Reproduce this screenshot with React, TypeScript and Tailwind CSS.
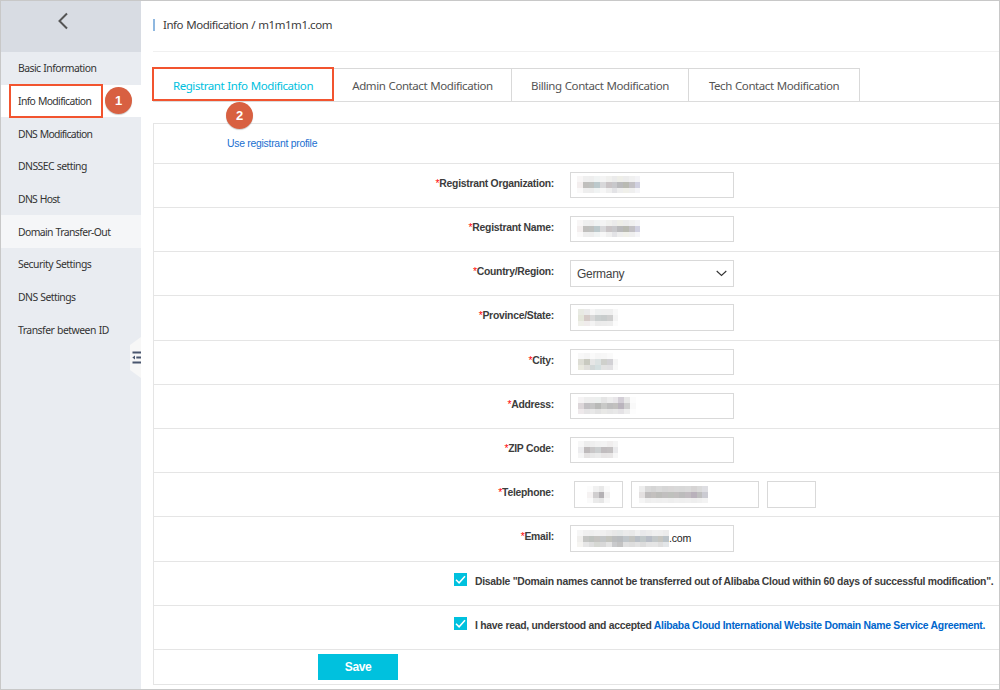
import React from "react";

type NavItem = { label: string; tracking: string; tone: string };

const NAV: NavItem[] = [
  { label: "Basic Information", tracking: "tracking-[-0.53px]", tone: "" },
  { label: "Info Modification", tracking: "tracking-[-0.64px]", tone: "bg-white" },
  { label: "DNS Modification", tracking: "tracking-[-0.7px]", tone: "" },
  { label: "DNSSEC setting", tracking: "tracking-[-0.54px]", tone: "" },
  { label: "DNS Host", tracking: "tracking-[-0.7px]", tone: "" },
  { label: "Domain Transfer-Out", tracking: "tracking-[-0.6px]", tone: "bg-[#f5f6f8]" },
  { label: "Security Settings", tracking: "tracking-[-0.5px]", tone: "" },
  { label: "DNS Settings", tracking: "tracking-[-0.55px]", tone: "" },
  { label: "Transfer between ID", tracking: "tracking-[-0.5px]", tone: "" },
];

const CELL = 5.75;

/** Pixelated stand-in for a masked value: one hex grey per cell, row by row. */
function Mosaic({ rows, className = "" }: { rows: string[][]; className?: string }) {
  const w = Math.max(...rows.map((r) => r.length)) * CELL;
  const h = rows.length * CELL;
  return (
    <svg width={w} height={h} viewBox={`0 0 ${w} ${h}`} shapeRendering="crispEdges" className={`shrink-0 ${className}`}>
      {rows.map((r, y) =>
        r.map((c, x) => <rect key={`${x}-${y}`} x={x * CELL} y={y * CELL} width={CELL} height={CELL} fill={`#${c}`} />),
      )}
    </svg>
  );
}

const NAME_MASK = [
  ["f8f6f6", "efefef", "eeeeee", "f0f3f3", "f4f4f4", "f0f0ee", "ebebeb", "eeeee8", "ececec", "f0f0f0", "f3f3f6"],
  ["f3eeee", "c0bfbd", "bfc1bf", "bcc9cc", "d8d8da", "c9c4c6", "c8c8cb", "bababc", "b9bab2", "c3c1c5", "d0d0e0"],
  ["faf9f9", "eeeeee", "ededed", "f0f3f3", "f7f7f7", "efefef", "e3e3e6", "eeeeee", "f0f0ea", "efefef", "f5f5f8"],
];
const PROVINCE_MASK = [
  ["e8eae3", "eaeaea", "f6f6f6", "eef0f0", "efefef", "efefef", "f8f8f8"],
  ["e4e6da", "d5cbc8", "d9d9d9", "cacfcf", "c8cccc", "cfcfcf", "f4f4f4"],
  ["efefe9", "f0ecec", "f3f3f3", "ebebeb", "ececec", "ededed", "fbfbfb"],
];
const CITY_MASK = [
  ["f8f8f8", "f5f5f5", "fafafa", "f6f6f6", "f7f7f7", "fafafa", "ffffff"],
  ["ddddd5", "c9cac0", "e6e6e6", "dce2e2", "cfd0cc", "d2d1d5", "f5f5f5"],
  ["e9e9df", "e0dfdb", "d3d8d8", "d4dfe0", "e3e3e3", "e2e1e3", "f8f8f8"],
];
const ADDRESS_MASK = [
  ["f5f3f4", "eeeeee", "eeeeee", "ecefee", "e5e5e5", "ededed", "e8e6e9", "d3ced6", "e8e8e8", "fcfcfc"],
  ["dcd6d9", "c2c0c3", "c5c5c5", "b9bab8", "c8c9c7", "bebebe", "c2c1bf", "bab4bd", "cfcfcf", "f9f9f9"],
  ["eee9eb", "e5e4e5", "e8e8e8", "e2e2e2", "e8e8e6", "e5e5e5", "e8e8e8", "e4e2e5", "eeeeee", "fdfdfd"],
];
const ZIP_MASK = [
  ["f7f7f7", "ededed", "efefef", "f2f2f2", "f3f3f3", "f0eeee", "f4f4f4"],
  ["ececee", "bebabb", "c9c7c8", "cccfd0", "c1bdbf", "c3c0c1", "e9e9eb"],
  ["f5f5f5", "e5e3e3", "e8e8e8", "ebebeb", "e7e5e5", "e8e6e6", "f6f6f6"],
];
const AREA_MASK = [
  ["fcfcfc", "f0f0f0", "e8e8e8", "fafafa"],
  ["f5f2f2", "d0cecf", "b4b1b4", "f0efef"],
  ["fafafa", "eaeaea", "e6e6e6", "f8f8f8"],
];
const PHONE_MASK = [
  ["ededed", "d9d9d9", "d5d5d5", "dadada", "d6d6d6", "d9d7d7", "d9d9d9", "d8d8d8", "dadada", "d6d4d4", "dadada", "dedee2"],
  ["e3e0e0", "bfbdbd", "c3c0be", "bdbdba", "c1bfbf", "bfc1bd", "c2bfbf", "bcbcbc", "c1bcc0", "b9b1bb", "bfbfbf", "cbcbd2"],
  ["f5f5f5", "eeeeee", "f0f0f0", "efefef", "f0f0f0", "eeeeee", "f0f0f0", "efefef", "f0f0f0", "eeeeee", "f0f0f0", "f3f3f3"],
];
const EMAIL_MASK = [
  ["f6f6f6", "f0f0f0", "efefef", "f1f1f1", "f0f0f0", "ececec", "e8e8e8", "e5e8e8", "ebebeb", "e9e9e9", "f0f0f0", "e9e9eb", "ececec", "f0f0f0", "efefef", "ececec"],
  ["f0efed", "c5c6c4", "bfc3bf", "c5c4c1", "c3c6c7", "c3c4be", "bcbebf", "b9bcbf", "c0c6ca", "c3c4c1", "b9bfc6", "c1c8c9", "b8bdc6", "c3c8c9", "c6c6c1", "bbc3c8"],
  ["f5f4f1", "e6e6e6", "dedede", "d6d8d3", "d8d8d8", "e4e4e4", "c9cacc", "c3c3c3", "e0e0e0", "dddddd", "e2e2e2", "dcdcdc", "e4e4e4", "e5e5e5", "dedede", "e3e6e8"],
];

const BOX = "flex h-full items-center border border-[#d9d9d9] bg-white";
const SMALL_BOLD = "text-[10.4px] font-bold tracking-[-0.275px] whitespace-nowrap text-[#3c3c3c]";

function Field({
  label,
  tall = false,
  deep = false,
  children,
}: {
  label: string;
  tall?: boolean;
  deep?: boolean;
  children: React.ReactNode;
}) {
  return (
    <div className={`flex shrink-0 items-start border-b border-[#e5e5e5] ${tall ? "h-[45px]" : "h-[44px]"}`}>
      <div className={`w-[400px] shrink-0 pt-[12px] text-right leading-[15px] ${SMALL_BOLD}`}>
        <span className="font-normal text-[#f00]">*</span>
        {label}
      </div>
      <div className={`mt-[8px] ml-4 flex ${deep ? "h-[27px]" : "h-[26px]"}`}>{children}</div>
    </div>
  );
}

function Masked({ rows, inset = "ml-[6px]" }: { rows: string[][]; inset?: string }) {
  return (
    <div className={`${BOX} w-[164px]`}>
      <Mosaic rows={rows} className={inset} />
    </div>
  );
}

function Check() {
  return (
    <span className="flex size-[13px] shrink-0 items-center justify-center bg-[#00c1de]">
      <svg width="13" height="13" viewBox="0 0 13 13" fill="none" stroke="#fff" strokeWidth="1.5">
        <path d="M2 6.7 L5.1 9.8 L11 3.2" />
      </svg>
    </span>
  );
}

function Badge({ n, className }: { n: number; className: string }) {
  return (
    <span
      className={`absolute flex size-[27px] items-center justify-center rounded-full bg-[#d86041] text-[13px] font-bold text-white shadow-[0_1px_1px_rgba(0,0,0,0.2)] ${className}`}
    >
      {n}
    </span>
  );
}

const TAB = "flex items-center justify-center border-t border-r border-[#d9d9d9] pt-px whitespace-nowrap";

export default function App() {
  return (
    <div className="relative flex h-[690px] w-[1000px] overflow-hidden border border-[#c8c8c8] bg-white font-['Liberation_Sans',Arial,sans-serif]">
      <aside className="relative flex w-[140px] shrink-0 flex-col bg-[#e9ecf1] font-['Noto_Sans',sans-serif]">
        <div className="flex h-[51px] shrink-0 items-center justify-center bg-[#d8dce3]">
          <svg width="12" height="18" viewBox="0 0 12 18" fill="none" stroke="#555" strokeWidth="2" className="relative -top-[6px] -left-[8px]">
            <path d="M10 1.5 L2.5 9 L10 16.5" />
          </svg>
        </div>
        <nav className="flex flex-col text-[10.4px] text-[#333] [word-spacing:0.6px]">
          {NAV.map((i) => (
            <div key={i.label} className={`flex h-[32.7px] items-center pt-[1.5px] pl-[17px] whitespace-nowrap ${i.tone}`}>
              <span className={i.tracking}>{i.label}</span>
            </div>
          ))}
        </nav>
        <svg width="11" height="42" viewBox="0 0 11 42" className="absolute top-[336px] right-0">
          <path d="M11 0 L0 8 V33 L11 41 Z" fill="#f7f7f7" />
          <path d="M2.5 15.5H11M6.3 20.5H11M2.5 25.5H11" stroke="#4a566e" strokeWidth="2" />
          <path d="M2.3 20.5 L5 18.6 V22.4 Z" fill="#4a566e" />
        </svg>
      </aside>

      <main className="flex min-w-0 flex-1 flex-col pl-[12px]">
        <header className="flex h-[51px] shrink-0 items-center border-b border-[#f0f0f0] pb-[3px] font-['Noto_Sans',sans-serif]">
          <span className="h-[12px] w-[2px] bg-[#8fb8e0]" />
          <h1 className="ml-[8px] text-[11.5px] tracking-[-0.46px] whitespace-nowrap text-[#3c3c3c] [word-spacing:0.6px]">Info Modification / m1m1m1.com</h1>
        </header>

        <div className="mt-4 flex h-[34px] shrink-0 border-b border-[#dcdcdc] font-['Noto_Sans',sans-serif] text-[11.5px] tracking-[-0.43px] text-[#555] [word-spacing:0.6px]">
          <div className={`${TAB} w-[181px] text-[#00c1de]`}>Registrant Info Modification</div>
          <div className={`${TAB} w-[178px]`}>Admin Contact Modification</div>
          <div className={`${TAB} w-[177px]`}>Billing Contact Modification</div>
          <div className={`${TAB} w-[171px]`}>Tech Contact Modification</div>
        </div>

        <section className="mt-[21px] flex flex-col border-t border-l border-[#e5e5e5]">
          <div className="flex h-[40px] shrink-0 items-center border-b border-[#e5e5e5] pl-[73px]">
            <a className="text-[10.4px] tracking-[-0.26px] text-[#1a6fd0]">Use registrant profile</a>
          </div>
          <Field label="Registrant Organization:"><Masked rows={NAME_MASK} /></Field>
          <Field label="Registrant Name:"><Masked rows={NAME_MASK} /></Field>
          <Field label="Country/Region:" deep>
            <div className={`${BOX} w-[164px] justify-between pr-[6px] pl-[6px] text-[12px] tracking-[-0.3px] text-[#444]`}>
              Germany
              <svg width="11" height="7" viewBox="0 0 11 7" fill="none" stroke="#333" strokeWidth="1.1">
                <path d="M0.7 1 L5.5 5.4 L10.3 1" />
              </svg>
            </div>
          </Field>
          <Field label="Province/State:" tall deep><Masked rows={PROVINCE_MASK} inset="ml-[7px]" /></Field>
          <Field label="City:"><Masked rows={CITY_MASK} inset="ml-[7px]" /></Field>
          <Field label="Address:"><Masked rows={ADDRESS_MASK} inset="ml-[7px]" /></Field>
          <Field label="ZIP Code:"><Masked rows={ZIP_MASK} inset="ml-[7px]" /></Field>
          <Field label="Telephone:" deep>
            <div className="ml-1 flex gap-2">
              <div className={`${BOX} w-[49px] justify-center`}><Mosaic rows={AREA_MASK} /></div>
              <div className={`${BOX} w-[128px]`}><Mosaic rows={PHONE_MASK} className="ml-[7px]" /></div>
              <div className={`${BOX} w-[49px]`} />
            </div>
          </Field>
          <Field label="Email:" tall deep>
            <div className={`${BOX} w-[164px] text-[10.6px] tracking-[-0.2px] text-[#222]`}>
              <Mosaic rows={EMAIL_MASK} className="ml-[6px]" />
              .com
            </div>
          </Field>
          <div className={`flex h-[44px] shrink-0 border-b border-[#e5e5e5] pt-[11px] pl-[300px] leading-[17px] ${SMALL_BOLD}`}>
            <Check />
            <span className="ml-[8px]">Disable "Domain names cannot be transferred out of Alibaba Cloud within 60 days of successful modification".</span>
          </div>
          <div className={`flex h-[44px] shrink-0 border-b border-[#e5e5e5] pt-[11px] pl-[300px] leading-[17px] ${SMALL_BOLD}`}>
            <Check />
            <span className="ml-[8px]">
              I have read, understood and accepted{" "}
              <a className="text-[#06c]">Alibaba Cloud International Website Domain Name Service Agreement.</a>
            </span>
          </div>
          <div className="h-[35px] shrink-0 border-b border-[#e5e5e5] pt-[4px] pl-[164px]">
            <button className="flex h-[26px] w-[80px] items-center justify-center bg-[#00c1de] text-[12px] font-bold tracking-[-0.4px] text-white">Save</button>
          </div>
        </section>
      </main>

      <div className="absolute top-[83px] left-[8px] h-[34px] w-[94px] border-2 border-[#f2542f]" />
      <div className="absolute top-[66px] left-[151px] h-[34px] w-[182px] border-2 border-[#f2542f]" />
      <Badge n={1} className="top-[86px] left-[104px]" />
      <Badge n={2} className="top-[101px] left-[225px]" />
    </div>
  );
}
